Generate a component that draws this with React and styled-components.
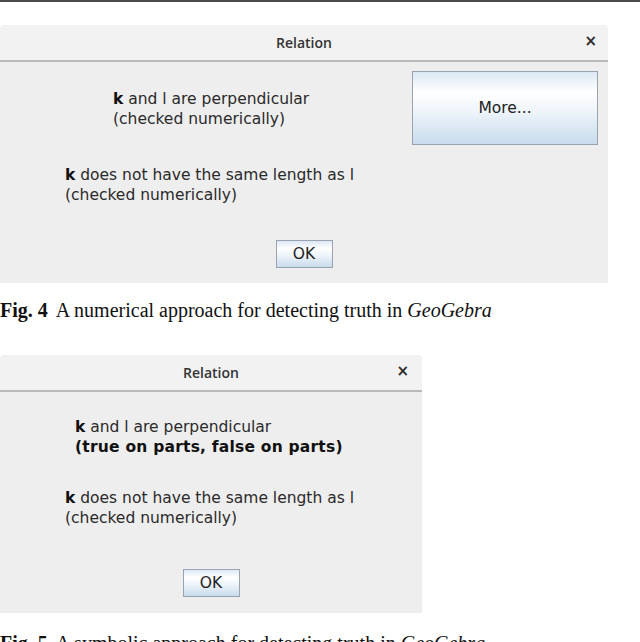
import React from "react";
import styled, { createGlobalStyle } from "styled-components";

const Global = createGlobalStyle`
  html, body { margin: 0; padding: 0; background: #ffffff; }
  body { width: 640px; height: 642px; overflow: hidden; }
`;

const Page = styled.div`
  display: flex;
  flex-direction: column;
  align-items: flex-start;
  width: 640px;
`;

const TopRule = styled.div`
  width: 640px;
  height: 2px;
  background: #4a4a4a;
`;

const Dialog = styled.div`
  width: ${(p) => p.$w}px;
  margin-top: ${(p) => p.$mt}px;
  display: flex;
  flex-direction: column;
  background: #eeeeee;
  border-radius: 5px 5px 0 0;
  box-shadow: inset 0 1px 0 #dcdcdc;
  font-family: "DejaVu Sans", Verdana, sans-serif;
  color: #1e1e1e;
`;

const TitleBar = styled.div`
  height: 35px;
  display: flex;
  align-items: center;
  justify-content: center;
  position: relative;
  background: #f2f2f2;
  border-radius: 5px 5px 0 0;
  border-bottom: 2px solid #b9b9b9;
`;

const Title = styled.span`
  font-family: "Open Sans", "DejaVu Sans", sans-serif;
  font-size: 14px;
  font-weight: 600;
  color: #333333;
`;

const Close = styled.span`
  position: absolute;
  right: ${(p) => p.$r}px;
  top: 8px;
  font-size: 15px;
  font-weight: bold;
  color: #2a2a2a;
  line-height: 17px;
`;

const Body = styled.div`
  display: flex;
  flex-direction: column;
  padding-bottom: ${(p) => p.$pb}px;
`;

const TopRow = styled.div`
  display: flex;
  align-items: flex-start;
`;

const Message = styled.div`
  margin-left: ${(p) => p.$ml}px;
  margin-top: ${(p) => p.$mt}px;
  font-size: 15.5px;
  line-height: 19.5px;
  color: #2a2a2a;
`;

const Line = styled.div`
  white-space: nowrap;
`;

const Name = styled.b`
  font-weight: bold;
  color: #111111;
`;

const Verdict = styled.span`
  font-weight: bold;
  color: #111111;
  letter-spacing: 0.22px;
`;

const Button = styled.div`
  width: ${(p) => p.$w}px;
  height: ${(p) => p.$h}px;
  box-sizing: border-box;
  border: 1px solid #9aa3ad;
  background: linear-gradient(
    to bottom,
    #dbe8f4 0%,
    #ffffff 28%,
    #eef4fa 55%,
    #c8dbec 100%
  );
  display: flex;
  align-items: center;
  justify-content: center;
  font-size: 15.5px;
  color: #222222;
`;

const MoreButton = styled(Button)`
  margin-left: auto;
  margin-right: 10px;
  margin-top: 9px;
`;

const OkButton = styled(Button)`
  align-self: center;
  margin-top: ${(p) => p.$mt}px;
`;

const Caption = styled.p`
  margin: ${(p) => p.$mt}px 0 0 0;
  font-family: "Liberation Serif", "Times New Roman", serif;
  font-size: 20px;
  line-height: 23px;
  color: #111111;
  white-space: nowrap;
`;

const FigLabel = styled.b`
  font-weight: bold;
  margin-right: 8px;
`;

const Product = styled.i`
  font-style: italic;
`;

export default function App() {
  return (
    <>
      <Global />
      <Page>
        <TopRule />
        <Dialog $w={608} $mt={23}>
          <TitleBar>
            <Title>Relation</Title>
            <Close $r={11}>×</Close>
          </TitleBar>
          <Body $pb={15}>
            <TopRow>
              <Message $ml={113} $mt={28}>
                <Line>
                  <Name>k</Name> and l are perpendicular
                </Line>
                <Line>(checked numerically)</Line>
              </Message>
              <MoreButton $w={186} $h={74}>
                More...
              </MoreButton>
            </TopRow>
            <Message $ml={65} $mt={21}>
              <Line>
                <Name>k</Name> does not have the same length as l
              </Line>
              <Line>(checked numerically)</Line>
            </Message>
            <OkButton $w={57} $h={28} $mt={35}>
              OK
            </OkButton>
          </Body>
        </Dialog>
        <Caption $mt={16}>
          <FigLabel>Fig. 4</FigLabel>A numerical approach for detecting truth in{" "}
          <Product>GeoGebra</Product>
        </Caption>
        <Dialog $w={422} $mt={33}>
          <TitleBar>
            <Title>Relation</Title>
            <Close $r={13}>×</Close>
          </TitleBar>
          <Body $pb={16}>
            <Message $ml={75} $mt={26}>
              <Line>
                <Name>k</Name> and l are perpendicular
              </Line>
              <Line>
                <Verdict>(true on parts, false on parts)</Verdict>
              </Line>
            </Message>
            <Message $ml={65} $mt={32}>
              <Line>
                <Name>k</Name> does not have the same length as l
              </Line>
              <Line>(checked numerically)</Line>
            </Message>
            <OkButton $w={57} $h={28} $mt={41}>
              OK
            </OkButton>
          </Body>
        </Dialog>
        <Caption $mt={19}>
          <FigLabel>Fig. 5</FigLabel>A symbolic approach for detecting truth in{" "}
          <Product>GeoGebra</Product>
        </Caption>
      </Page>
    </>
  );
}
